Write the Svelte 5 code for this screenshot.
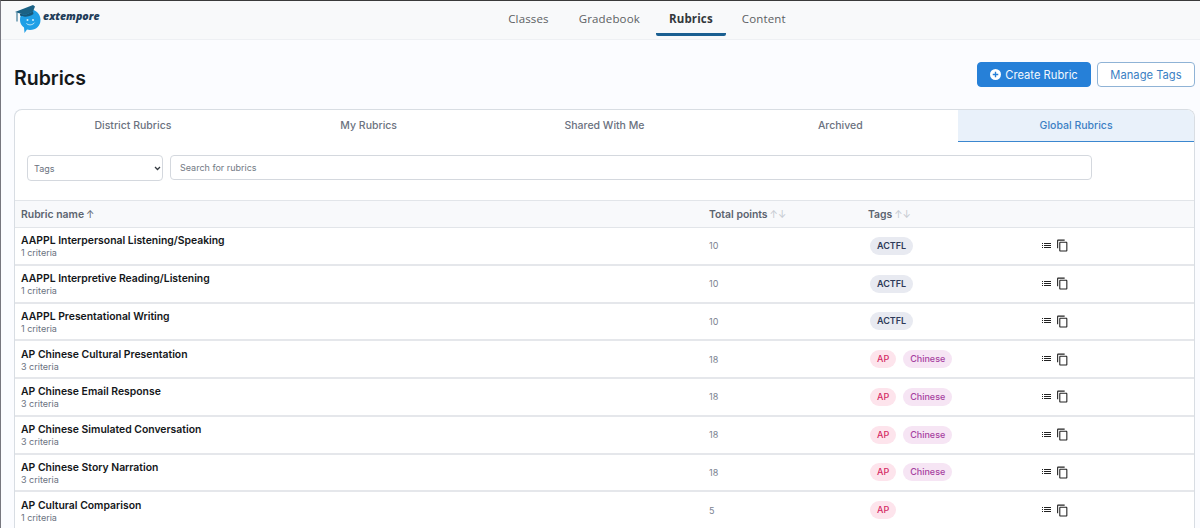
<script>
  const rows = [
    { name: 'AAPPL Interpersonal Listening/Speaking', criteria: 1, points: 10, tags: ['ACTFL'] },
    { name: 'AAPPL Interpretive Reading/Listening', criteria: 1, points: 10, tags: ['ACTFL'] },
    { name: 'AAPPL Presentational Writing', criteria: 1, points: 10, tags: ['ACTFL'] },
    { name: 'AP Chinese Cultural Presentation', criteria: 3, points: 18, tags: ['AP', 'Chinese'] },
    { name: 'AP Chinese Email Response', criteria: 3, points: 18, tags: ['AP', 'Chinese'] },
    { name: 'AP Chinese Simulated Conversation', criteria: 3, points: 18, tags: ['AP', 'Chinese'] },
    { name: 'AP Chinese Story Narration', criteria: 3, points: 18, tags: ['AP', 'Chinese'] },
    { name: 'AP Cultural Comparison', criteria: 1, points: 5, tags: ['AP'] }
  ];
  const tabs = ['District Rubrics', 'My Rubrics', 'Shared With Me', 'Archived', 'Global Rubrics'];
  const nav = ['Classes', 'Gradebook', 'Rubrics', 'Content'];
</script>

<div class="page">
  <header class="topbar">
    <div class="logo">
      <svg width="28" height="30" viewBox="14 3 28 30">
        <path d="M30 9.500c6 0 10.500 4.500 10.500 10.500S36 30 30 30c-1 0-2-.2-3-.5L24.500 33l-.5-5.500c-2.500-2-4-4.500-4-7.500 0-6 4-10.500 10-10.500z" fill="#1f9fe6"/>
        <path d="M15 12 33 5l2 1.500-2 5-8 3.500z" fill="#1b6285"/>
        <path d="M20 13.500 25 15l8-3.500.5 2.500c-4 3-10 3.500-13.500 1.500z" fill="#17587a"/>
        <path d="M17 12.500v9" stroke="#1b6285" stroke-width="1"/>
        <circle cx="27.500" cy="20" r="1" fill="#cfeefc"/>
        <circle cx="33" cy="20" r="1" fill="#cfeefc"/>
        <path d="M26.500 23.500c2 2 6 1.800 8-.8" fill="none" stroke="#cfeefc" stroke-width="1"/>
      </svg>
      <span class="wordmark">extempore</span>
    </div>
    <nav class="nav">
      {#each nav as item}
        <span class="nav-item" class:active={item === 'Rubrics'}>{item}</span>
      {/each}
    </nav>
  </header>

  <main class="main">
    <div class="title-row">
      <h1>Rubrics</h1>
      <div class="actions">
        <button class="btn primary">
          <svg width="11" height="11" viewBox="0 0 16 16"><circle cx="8" cy="8" r="8" fill="#fff"/><path d="M8 4v8M4 8h8" stroke="#2680d8" stroke-width="2"/></svg>
          Create Rubric
        </button>
        <button class="btn outline">Manage Tags</button>
      </div>
    </div>

    <section class="card">
      <div class="tabs">
        {#each tabs as tab}
          <div class="tab" class:selected={tab === 'Global Rubrics'}>{tab}</div>
        {/each}
      </div>
      <div class="filters">
        <div class="select-wrap">
          <select class="select"><option>Tags</option></select>
          <svg class="chevron" width="7" height="5" viewBox="0 0 7 5"><path d="M1 1l2.500 2.500L6 1" fill="none" stroke="#343a40" stroke-width="1.300"/></svg>
        </div>
        <input class="search" placeholder="Search for rubrics" />
      </div>
      <div class="row head">
        <div>Rubric name<span class="arrows dark">↑</span></div>
        <div>Total points<span class="arrows">↑↓</span></div>
        <div>Tags<span class="arrows">↑↓</span></div>
      </div>
      {#each rows as r}
        <div class="row body">
          <div class="name-cell">
            <div class="name">{r.name}</div>
            <div class="criteria">{r.criteria} criteria</div>
          </div>
          <div class="points">{r.points}</div>
          <div class="tags">
            {#each r.tags as t}
              <span class="tag {t.toLowerCase()}">{t}</span>
            {/each}
          </div>
          <div class="icons">
            <svg width="12" height="12" viewBox="1 1 24 24"><path d="M3 13h2v-2H3v2zm0 4h2v-2H3v2zm0-8h2V7H3v2zm4 4h14v-2H7v2zm0 4h14v-2H7v2zM7 7v2h14V7H7z" fill="#222"/></svg>
            <svg width="13" height="13" viewBox="0 0 24 24"><path d="M16 1H4c-1.100 0-2 .9-2 2v14h2V3h12V1zm3 4H8c-1.100 0-2 .9-2 2v14c0 1.100.9 2 2 2h11c1.100 0 2-.9 2-2V7c0-1.100-.9-2-2-2zm0 16H8V7h11v14z" fill="#222"/></svg>
          </div>
        </div>
      {/each}
    </section>
  </main>
</div>

<style>
  :global(body) {
    margin: 0;
    overflow: hidden;
    background: #fbfcff;
    font-family: Inter, "Liberation Sans", sans-serif;
  }
  .page {
    width: 1200px;
    height: 528px;
    overflow: hidden;
    box-sizing: border-box;
    border-top: 1px solid #3a3a3a;
    border-left: 1px solid #77777f;
    background: #fbfcff;
  }
  .topbar {
    height: 39px;
    box-sizing: border-box;
    background: #f8f9fa;
    border-bottom: 1px solid #eef0f3;
    display: flex;
    position: relative;
    justify-content: center;
  }
  .logo {
    position: absolute;
    left: 13px;
    top: 2px;
    display: flex;
    align-items: flex-start;
    gap: 1px;
  }
  .wordmark {
    font-family: "Open Sans", sans-serif;
    font-weight: 800;
    font-style: italic;
    font-size: 10.600px;
    color: #1f3d59;
    margin-top: 6px;
  }
  .nav {
    display: flex;
    gap: 2px;
    margin-left: 93px;
  }
  .nav-item {
    padding: 0 14px;
    height: 35px;
    box-sizing: border-box;
    font-family: "Open Sans", sans-serif;
    font-size: 11.500px;
    letter-spacing: 0.15px;
    line-height: 36px;
    color: #5c5f63;
    border-bottom: 3px solid transparent;
    border-radius: 2px;
  }
  .nav-item.active {
    font-weight: 700;
    color: #33373b;
    border-bottom-color: #1a5f91;
    padding: 0 13px;
  }
  .main {
    padding: 0 4px 0 13px;
  }
  .title-row {
    height: 69px;
    display: flex;
    justify-content: space-between;
    position: relative;
  }
  h1 {
    margin: 25px 0 0;
    font-size: 19.500px;
    line-height: 26px;
    font-weight: 600;
    color: #14171a;
  }
  .actions {
    display: flex;
    gap: 6px;
    padding-top: 22px;
    padding-right: 1px;
  }
  .btn {
    height: 25px;
    box-sizing: border-box;
    border-radius: 4px;
    font-family: inherit;
    font-size: 11.200px;
    display: flex;
    align-items: center;
    justify-content: center;
    gap: 4px;
    padding: 0;
  }
  .primary {
    width: 114px;
    background: #2680d8;
    border: 1px solid #2680d8;
    color: #f2f8fd;
  }
  .outline {
    width: 98px;
    background: #fff;
    border: 1px solid #8fb3d6;
    color: #3b7fc4;
  }
  .card {
    width: 1181px;
    box-sizing: border-box;
    background: #fff;
    border: 1px solid #d8dde3;
    border-bottom: 0;
    border-radius: 8px 8px 0 0;
    overflow: hidden;
  }
  .tabs {
    display: grid;
    grid-template-columns: repeat(5, 1fr);
    height: 31px;
  }
  .tab {
    font-size: 10.500px;
    font-weight: 500;
    color: #6b7280;
    text-align: center;
    line-height: 31px;
    box-sizing: border-box;
  }
  .tab.selected {
    background: #e9f1fa;
    color: #3b7fc4;
    border-bottom: 1px solid #3b87cf;
  }
  .filters {
    display: flex;
    gap: 7px;
    padding: 14px 12px 19px;
    align-items: flex-start;
  }
  .select-wrap {
    position: relative;
    width: 136px;
    height: 26px;
  }
  .select {
    appearance: none;
    width: 100%;
    height: 26px;
    box-sizing: border-box;
    background: #fff;
    border: 1px solid #d4d8de;
    border-radius: 4px;
    font-family: inherit;
    font-size: 9px;
    color: #6b7280;
    padding: 0 6px;
  }
  .chevron {
    position: absolute;
    right: 2px;
    top: 11px;
  }
  .search {
    width: 922px;
    height: 25px;
    box-sizing: border-box;
    border: 1px solid #d4d8de;
    border-radius: 4px;
    font-family: inherit;
    font-size: 9px;
    padding: 0 9px;
  }
  .search::placeholder {
    color: #737a84;
  }
  .row {
    display: grid;
    grid-template-columns: 688px 159px 174px 1fr;
    padding-left: 6px;
    box-sizing: border-box;
    align-items: center;
  }
  .head {
    height: 28px;
    background: #f8f9fb;
    border-top: 1px solid #e2e5e9;
    border-bottom: 1px solid #e2e5e9;
    font-size: 10.400px;
    font-weight: 600;
    color: #5c6470;
  }
  .arrows {
    color: #c5cad1;
    font-size: 10px;
    font-weight: 400;
    margin-left: 2px;
  }
  .arrows.dark {
    color: #5c6470;
  }
  .body {
    height: 37.750px;
    border-bottom: 2px solid #e5e7eb;
  }
  .name-cell {
    padding-top: 2px;
  }
  .name {
    font-size: 10.400px;
    font-weight: 600;
    color: #14171a;
    line-height: 13px;
  }
  .criteria {
    font-size: 9px;
    color: #6b7280;
    line-height: 12px;
  }
  .points {
    font-size: 9px;
    color: #7b8290;
  }
  .tags {
    display: flex;
    gap: 7px;
    padding-left: 2px;
  }
  .tag {
    height: 18px;
    line-height: 18px;
    border-radius: 9px;
    font-size: 9px;
    font-weight: 500;
    padding: 0 7px;
  }
  .actfl {
    background: #e8eaf1;
    color: #2e3a59;
    font-weight: 600;
  }
  .ap {
    background: #fde4ec;
    color: #d42a63;
  }
  .chinese {
    background: #f6e5f4;
    color: #a63fa0;
  }
  .icons {
    display: flex;
    align-items: center;
    gap: 3px;
    margin-left: -1px;
  }
</style>
